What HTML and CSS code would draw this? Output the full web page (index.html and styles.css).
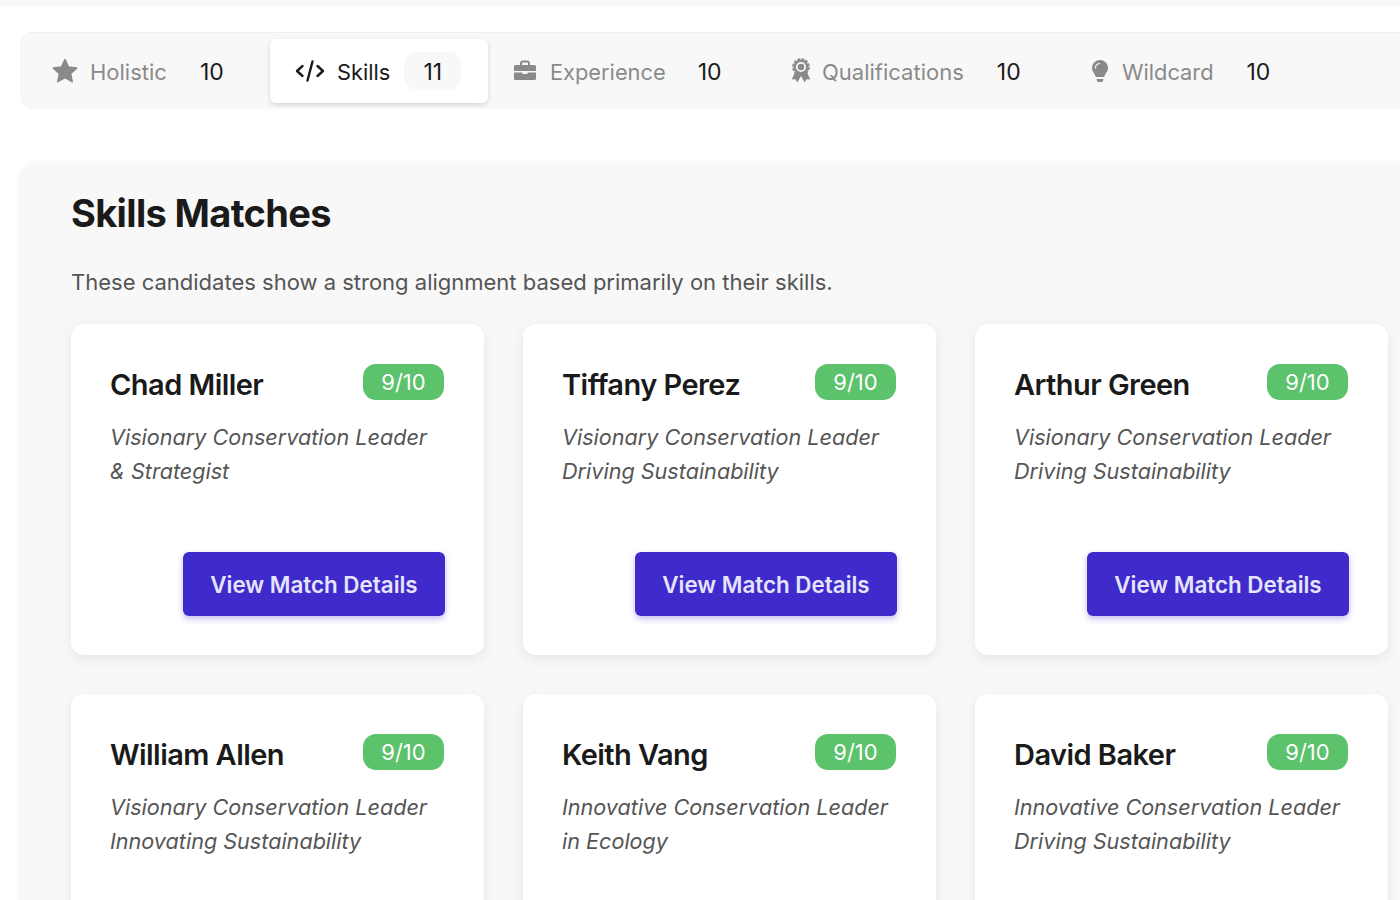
FILE: index.html
```html
<!DOCTYPE html>
<html lang="en">
<head>
<meta charset="utf-8">
<title>Skills Matches</title>
<link rel="stylesheet" href="styles.css">
</head>
<body>
<div class="topstrip"></div>
<main class="page">
  <nav class="tabs">
    <div class="tab tab-holistic">
      <svg class="icon" width="26" height="26" viewBox="0 0 24 24"><path d="M12 1.5l3.2 6.9 7.5.9-5.6 5.1 1.5 7.4-6.6-3.7-6.6 3.700 1.500-7.400-5.600-5.100 7.500-.9z" fill="#8a8a8a" stroke="#8a8a8a" stroke-width="1.5" stroke-linejoin="round"/></svg>
      <span class="label">Holistic</span><span class="count">10</span>
    </div>
    <div class="tab active">
      <svg class="icon" width="30" height="24" viewBox="0 0 30 24" fill="none" stroke="#1a1a1a" stroke-width="2.4" stroke-linecap="round" stroke-linejoin="round"><path d="M7.5 7L2 12l5.500 5"/><path d="M22.500 7L28 12l-5.500 5"/><path d="M17.500 2.500L12.500 21.500"/></svg>
      <span class="label">Skills</span><span class="count">11</span>
    </div>
    <div class="tab tab-exp">
      <svg class="icon" width="24" height="22" viewBox="0 0 24 22"><path d="M8 5V3.500A2 2 0 0 1 10 1.500h4a2 2 0 0 1 2 2V5" fill="none" stroke="#8a8a8a" stroke-width="2"/><path d="M2.500 5h19A1.500 1.500 0 0 1 23 6.500V11H1V6.500A1.500 1.500 0 0 1 2.500 5z" fill="#8a8a8a"/><path d="M1 12.500h8.500V14h5v-1.500H23v6A1.500 1.500 0 0 1 21.500 20h-19A1.500 1.500 0 0 1 1 18.500z" fill="#8a8a8a"/></svg>
      <span class="label">Experience</span><span class="count">10</span>
    </div>
    <div class="tab tab-qual">
      <svg class="icon" width="20" height="26" viewBox="0 0 20 26"><path d="M4 14L0.800 21.500l3.700-.3 1.800 3.300L10 18l3.700 6.500 1.800-3.300 3.700.3L16 14z" fill="#8a8a8a"/><circle cx="10" cy="9" r="7.500" fill="#8a8a8a"/><circle cx="10" cy="9" r="8" fill="none" stroke="#8a8a8a" stroke-width="1.600" stroke-dasharray="3 1.200"/><circle cx="10" cy="9" r="4.200" fill="none" stroke="#f8f8f8" stroke-width="1.800"/></svg>
      <span class="label">Qualifications</span><span class="count">10</span>
    </div>
    <div class="tab tab-wild">
      <svg class="icon" width="18" height="24" viewBox="0 0 18 24"><path d="M9 1a8 8 0 0 0-8 8c0 3.500 3 5.500 3.800 9h8.400C14 14.500 17 12.500 17 9a8 8 0 0 0-8-8z" fill="#8a8a8a"/><path d="M5.500 20h7l-1 3h-5z" fill="#8a8a8a"/><path d="M4.500 9a4.500 4.500 0 0 1 4-4.500" fill="none" stroke="#f8f8f8" stroke-width="1.200" stroke-linecap="round"/></svg>
      <span class="label">Wildcard</span><span class="count">10</span>
    </div>
  </nav>

  <section class="panel">
    <h1 class="title">Skills Matches</h1>
    <p class="lead">These candidates show a strong alignment based primarily on their skills.</p>
    <div class="grid">
      <article class="card">
        <div class="head"><h2 class="name">Chad Miller</h2><span class="score">9/10</span></div>
        <p class="role">Visionary Conservation Leader &amp; Strategist</p>
        <div class="actions"><button class="btn">View Match Details</button></div>
      </article>
      <article class="card">
        <div class="head"><h2 class="name">Tiffany Perez</h2><span class="score">9/10</span></div>
        <p class="role">Visionary Conservation Leader Driving Sustainability</p>
        <div class="actions"><button class="btn">View Match Details</button></div>
      </article>
      <article class="card">
        <div class="head"><h2 class="name">Arthur Green</h2><span class="score">9/10</span></div>
        <p class="role">Visionary Conservation Leader Driving Sustainability</p>
        <div class="actions"><button class="btn">View Match Details</button></div>
      </article>
      <article class="card">
        <div class="head"><h2 class="name">William Allen</h2><span class="score">9/10</span></div>
        <p class="role">Visionary Conservation Leader Innovating Sustainability</p>
        <div class="actions"><button class="btn">View Match Details</button></div>
      </article>
      <article class="card">
        <div class="head"><h2 class="name">Keith Vang</h2><span class="score">9/10</span></div>
        <p class="role">Innovative Conservation Leader in Ecology</p>
        <div class="actions"><button class="btn">View Match Details</button></div>
      </article>
      <article class="card">
        <div class="head"><h2 class="name">David Baker</h2><span class="score">9/10</span></div>
        <p class="role">Innovative Conservation Leader Driving Sustainability</p>
        <div class="actions"><button class="btn">View Match Details</button></div>
      </article>
    </div>
  </section>
</main>
</body>
</html>
```

FILE: styles.css
```css
* { box-sizing: border-box; }
html, body { margin: 0; height: 900px; overflow: hidden; background: #fff; }
body { font-family: Inter, "Liberation Sans", sans-serif; color: #1a1a1a; }

.topstrip { height: 6px; background: #f8f8f8; }

.page { width: 1500px; padding: 26px 0 0 19px; }

.tabs {
  display: flex; align-items: center;
  height: 77px; margin-left: 1px; padding: 0 7px;
  background: #f8f8f8; border-radius: 13px;
  border-top: 1px solid #f0f0f0;
}
.tab { display: flex; align-items: center; height: 64px; font-size: 22px; flex: none; }
.tab .label { color: #8a8a8a; padding-top: 2px; }
.tab .count { color: #1a1a1a; padding-top: 2px; font-size: 23px; }

.tab-holistic { width: 243px; padding-left: 25px; }
.tab-holistic .label { margin-left: 12px; }
.tab-holistic .count { margin-left: 33px; }

.active {
  width: 218px; padding-left: 25px;
  background: #fff; border-radius: 6px;
  box-shadow: 0 2px 5px rgba(0,0,0,.14);
}
.active .label { color: #1a1a1a; margin-left: 12px; font-size: 21.8px; }
.active .count {
  margin-left: 14px; width: 57px; height: 38px; border-radius: 13px;
  background: #f8f8f8; display: flex; align-items: center; justify-content: center;
}

.tab-exp { width: 277px; padding-left: 25px; font-size: 21.8px; }
.tab-exp .label { margin-left: 13px; }
.tab-exp .count { margin-left: 32px; }

.tab-qual { width: 299px; padding-left: 26px; }
.tab-qual .label { margin-left: 11px; }
.tab-qual .count { margin-left: 33px; }

.tab-wild { padding-left: 27px; font-size: 21.8px; }
.tab-wild .label { margin-left: 13px; }
.tab-wild .count { margin-left: 33px; }

.panel {
  margin-top: 52px; padding: 27px 0 60px 52px;
  background: #f8f8f8; border-radius: 19px;
  box-shadow: 0 1px 6px rgba(0,0,0,.03);
}
.title { margin: 0; font-size: 38px; line-height: 50px; font-weight: 700; letter-spacing: -.65px; color: #1a1a1a; }
.lead { margin: 27px 0 0; font-size: 22px; line-height: 34px; color: #555; }

.grid { display: grid; grid-template-columns: repeat(3, 413px); gap: 39px; margin-top: 25px; }

.card {
  height: 331px; padding: 40px 40px 39px 39px;
  background: #fff; border-radius: 13px;
  box-shadow: 0 4px 13px rgba(0,0,0,.08);
  display: flex; flex-direction: column;
}
.head { display: flex; justify-content: space-between; align-items: flex-start; }
.name { margin: 0; font-size: 29px; line-height: 42px; font-weight: 600; letter-spacing: -.55px; color: #1a1a1a; }
.score {
  width: 81px; height: 36px; border-radius: 13px;
  background: #5cc26c; color: #fff; font-size: 22px;
  display: flex; align-items: center; justify-content: center;
}
.role { margin: 14px 0 0; font-size: 21.6px; line-height: 34px; font-style: italic; color: #555; }
.actions { margin-top: auto; display: flex; justify-content: flex-end; margin-right: -1px; }
.btn {
  width: 262px; height: 64px; border: 0; border-radius: 6px;
  background: #3f2bcb; color: #e6e4fb;
  font-family: inherit; font-size: 22.4px; font-weight: 600;
  box-shadow: 0 3px 6px rgba(63,43,203,.3);
}
```
